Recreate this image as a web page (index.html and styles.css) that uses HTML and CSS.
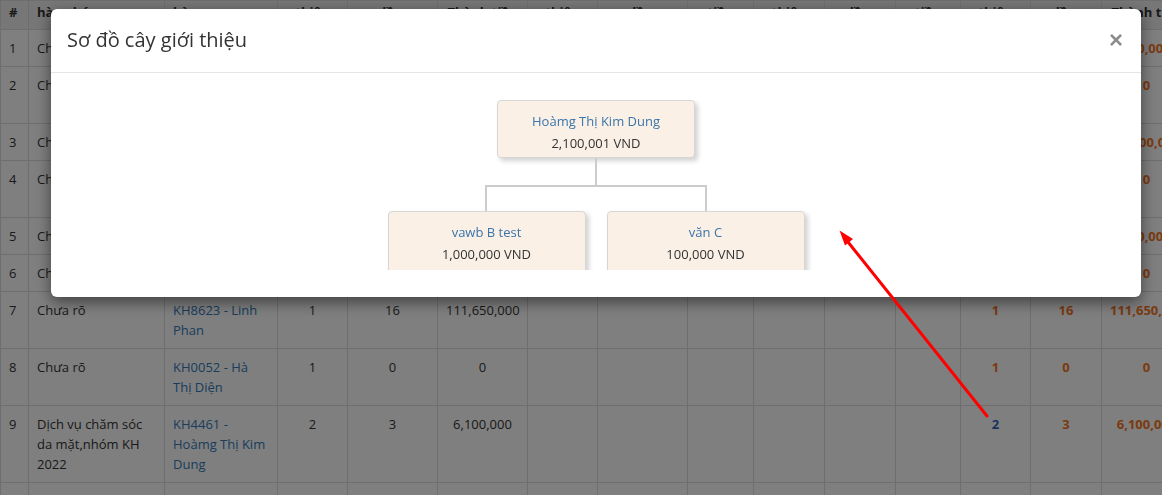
FILE: index.html
```html
<!DOCTYPE html>
<html lang="vi">
<head>
<meta charset="utf-8">
<title>Sơ đồ cây giới thiệu</title>
<link rel="stylesheet" href="styles.css">
</head>
<body>
<div class="page">
  <table class="grid">
    <colgroup>
      <col class="w28"><col class="w136"><col class="w113"><col class="w70"><col class="w90">
      <col class="w90"><col class="w70"><col class="w90"><col class="w66"><col class="w71">
      <col class="w71"><col class="w65"><col class="w70"><col class="w71"><col class="w90">
    </colgroup>
    <thead>
      <tr>
        <th>#</th><th>hàng hóa</th><th>hàng</th><th class="c">thiệu</th><th class="c">lần</th>
        <th class="c">Thành tiền</th><th class="c">thiệu</th><th class="c">lần</th><th class="c">tiền</th><th class="c">thiệu</th>
        <th class="c">lần</th><th class="c">tiền</th><th class="c">thiệu</th><th class="c">lần</th><th class="c">Thành tiền</th>
      </tr>
    </thead>
    <tbody>
      <tr>
        <td>1</td><td>Chưa rõ</td><td><span class="link">KH1021 - An</span></td><td class="c">1</td><td class="c">1</td><td class="c">100,000</td>
        <td></td><td></td><td></td><td></td><td></td><td></td>
        <td class="c hl">1</td><td class="c hl">1</td><td class="c hl">100,000</td>
      </tr>
      <tr>
        <td>2</td><td>Chưa rõ</td><td><span class="link">KH3390 - Mai Anh</span></td><td class="c">1</td><td class="c">0</td><td class="c">0</td>
        <td></td><td></td><td></td><td></td><td></td><td></td>
        <td class="c hl">1</td><td class="c hl">0</td><td class="c hl">0</td>
      </tr>
      <tr>
        <td>3</td><td>Chưa rõ</td><td><span class="link">KH2210 - Hoa</span></td><td class="c">1</td><td class="c">5</td><td class="c">12,800,000</td>
        <td></td><td></td><td></td><td></td><td></td><td></td>
        <td class="c hl">1</td><td class="c hl">5</td><td class="c hl">12,800,000</td>
      </tr>
      <tr>
        <td>4</td><td>Chưa rõ</td><td><span class="link">KH7715 - Thu Trang</span></td><td class="c">1</td><td class="c">0</td><td class="c">0</td>
        <td></td><td></td><td></td><td></td><td></td><td></td>
        <td class="c hl">1</td><td class="c hl">0</td><td class="c hl">0</td>
      </tr>
      <tr>
        <td>5</td><td>Chưa rõ</td><td><span class="link">KH1190 - Vy</span></td><td class="c">1</td><td class="c">1</td><td class="c">200,000</td>
        <td></td><td></td><td></td><td></td><td></td><td></td>
        <td class="c hl">1</td><td class="c hl">1</td><td class="c hl">200,000</td>
      </tr>
      <tr>
        <td>6</td><td>Chưa rõ</td><td><span class="link">KH5012 - Na</span></td><td class="c">1</td><td class="c">0</td><td class="c">0</td>
        <td></td><td></td><td></td><td></td><td></td><td></td>
        <td class="c hl">1</td><td class="c hl">0</td><td class="c hl">0</td>
      </tr>
      <tr>
        <td>7</td><td>Chưa rõ</td><td><span class="link">KH8623 - Linh Phan</span></td><td class="c">1</td><td class="c">16</td><td class="c">111,650,000</td>
        <td></td><td></td><td></td><td></td><td></td><td></td>
        <td class="c hl">1</td><td class="c hl">16</td><td class="c hl">111,650,000</td>
      </tr>
      <tr>
        <td>8</td><td>Chưa rõ</td><td><span class="link">KH0052 - Hà Thị&nbsp;Diện</span></td><td class="c">1</td><td class="c">0</td><td class="c">0</td>
        <td></td><td></td><td></td><td></td><td></td><td></td>
        <td class="c hl">1</td><td class="c hl">0</td><td class="c hl">0</td>
      </tr>
      <tr>
        <td>9</td><td>Dịch vụ chăm sóc da mặt,nhóm KH 2022</td><td><span class="link">KH4461 - Hoàmg Thị Kim Dung</span></td><td class="c">2</td><td class="c">3</td><td class="c">6,100,000</td>
        <td></td><td></td><td></td><td></td><td></td><td></td>
        <td class="c hl-blue">2</td><td class="c hl">3</td><td class="c hl">6,100,000</td>
      </tr>
      <tr>
        <td>10</td><td>Chưa rõ</td><td><span class="link">KH3301 - Bình</span></td><td class="c">1</td><td class="c">0</td><td class="c">0</td>
        <td></td><td></td><td></td><td></td><td></td><td></td>
        <td class="c hl">1</td><td class="c hl">0</td><td class="c hl">0</td>
      </tr>
    </tbody>
  </table>
</div>

<div class="backdrop"></div>

<div class="modal">
  <div class="modal-header">
    <h4 class="modal-title">Sơ đồ cây giới thiệu</h4>
    <button class="close" type="button">×</button>
  </div>
  <div class="modal-body">
    <div class="tree-viewport">
      <div class="tree">
        <div class="node">
          <div class="node-name">Hoàmg Thị Kim Dung</div>
          <div class="node-amount">2,100,001 VND</div>
        </div>
        <div class="stem"></div>
        <div class="branch"></div>
        <div class="children">
          <div class="node node-child">
            <div class="node-name">vawb B test</div>
            <div class="node-amount">1,000,000 VND</div>
          </div>
          <div class="node node-child">
            <div class="node-name">văn C</div>
            <div class="node-amount">100,000 VND</div>
          </div>
        </div>
      </div>
    </div>
  </div>
</div>

<svg class="annotation" width="1162" height="495" viewBox="0 0 1162 495" aria-hidden="true">
  <line x1="987" y1="416" x2="848" y2="242" stroke="#ff0000" stroke-width="3" stroke-linecap="round"/>
  <polygon points="839.5,230.5 853,239 845,245.5" fill="#ff0000"/>
</svg>
</body>
</html>
```

FILE: styles.css
```css
html, body {
  margin: 0;
  height: 100%;
  overflow: hidden;
}

body {
  font-family: "Open Sans", "Noto Sans", sans-serif;
  font-size: 13px;
  line-height: 20px;
  color: #333;
  background: #fff;
}

.page {
  width: 100%;
  overflow: hidden;
}

.grid {
  border-collapse: collapse;
  table-layout: fixed;
  width: 1191px;
}

.w28 { width: 28px; }
.w136 { width: 136px; }
.w113 { width: 113px; }
.w70 { width: 70px; }
.w90 { width: 90px; }
.w66 { width: 66px; }
.w71 { width: 71px; }
.w65 { width: 65px; }

.grid th,
.grid td {
  border: 1px solid #ddd;
  padding: 8px;
  vertical-align: top;
  text-align: left;
}

.grid tbody td {
  height: 20px;
}

.grid thead th {
  background: #eee;
  padding: 1px 8px 7px;
  font-weight: bold;
  white-space: nowrap;
  overflow: hidden;
}

.grid .c { text-align: center; }

.link { color: #337ab7; }

.hl {
  color: #f47424;
  font-weight: bold;
}

.hl-blue {
  color: #3366bb;
  font-weight: bold;
}

.backdrop {
  position: fixed;
  inset: 0;
  background: rgba(0, 0, 0, 0.5);
}

.modal {
  position: fixed;
  left: 51px;
  top: 9px;
  width: 1090px;
  background: #fff;
  border-radius: 6px;
  box-shadow: 0 5px 15px rgba(0, 0, 0, 0.5);
  overflow: hidden;
}

.modal-header {
  display: flex;
  align-items: center;
  justify-content: space-between;
  padding: 15px 15px 16px 16px;
  border-bottom: 1px solid #e5e5e5;
}

.modal-title {
  margin: 0;
  font-size: 20px;
  line-height: 32px;
  font-weight: normal;
  color: #333;
}

.close {
  border: 0;
  background: none;
  padding: 0 3px;
  font-family: "Liberation Sans", Arial, sans-serif;
  font-size: 24px;
  line-height: 24px;
  font-weight: bold;
  color: #000;
  opacity: 0.45;
}

.modal-body {
  padding: 27px 15px;
}

.tree-viewport {
  height: 170px;
  overflow: hidden;
}

.tree {
  display: flex;
  flex-direction: column;
  align-items: center;
}

.node {
  box-sizing: border-box;
  width: 198px;
  padding: 10px 8px 3px;
  background: #faf0e6;
  border: 1px solid #d6d6d6;
  border-radius: 4px;
  box-shadow: 3px 3px 5px rgba(0, 0, 0, 0.18);
  text-align: center;
  line-height: 21.5px;
}

.node-child {
  padding-bottom: 8px;
}

.node-name { color: #3a75ab; }

.node-amount { color: #333; }

.stem {
  width: 2px;
  height: 27px;
  background: #ccc;
}

.branch {
  box-sizing: border-box;
  width: 222px;
  height: 26px;
  border: 2px solid #ccc;
  border-bottom: 0;
}

.children {
  display: flex;
  gap: 21px;
}

.annotation {
  position: fixed;
  left: 0;
  top: 0;
  pointer-events: none;
}
```
